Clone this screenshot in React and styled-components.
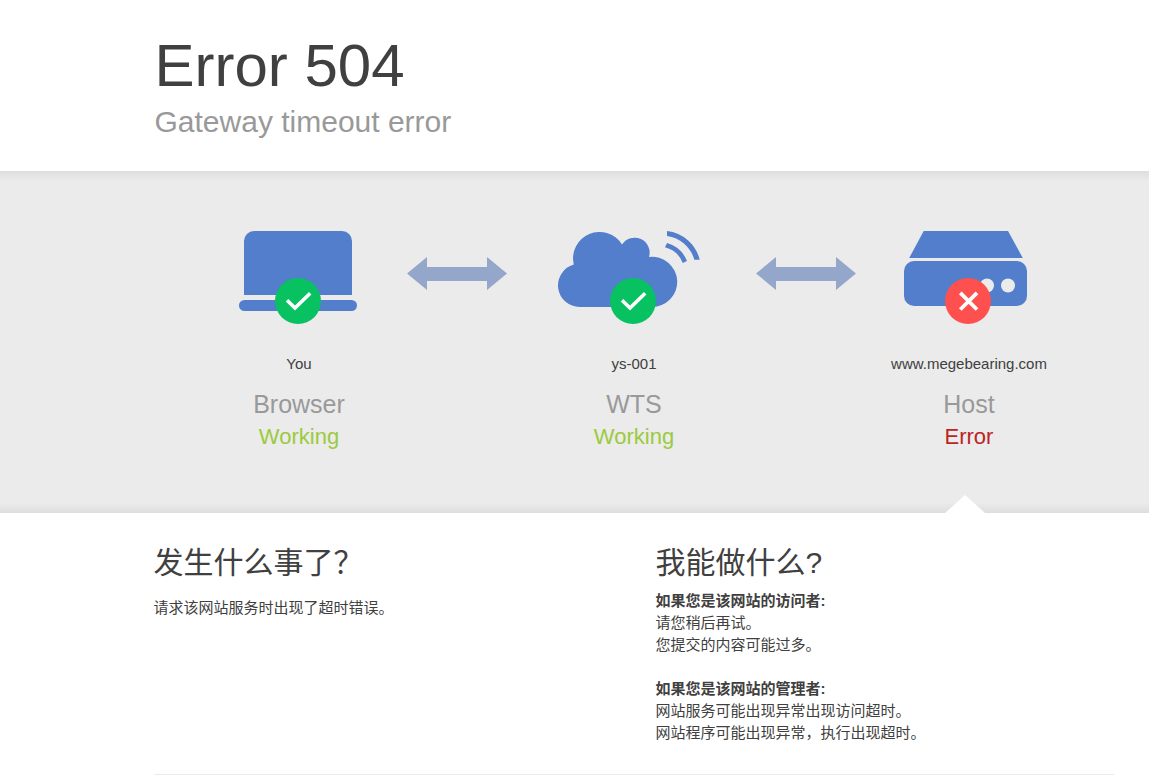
import React from 'react'
import styled, { createGlobalStyle } from 'styled-components'

const GlobalStyle = createGlobalStyle`
  body {
    margin: 0;
    background-color: #fff;
    color: #404040;
    font-family: "Liberation Sans", Arial, "Noto Sans CJK SC", sans-serif;
    font-size: 15px;
    line-height: 22px;
  }
`

const Wrapper = styled.div`
  max-width: 960px;
  margin-left: max(20px, calc(50% - 420px));
`

const Header = styled.header`
  padding: 33px 0 31px;
`

const Title = styled.h1`
  margin: 0 0 5px;
  font-size: 60px;
  font-weight: 400;
  line-height: 66px;
`

const Subtitle = styled.h2`
  margin: 0;
  font-size: 30px;
  font-weight: 400;
  line-height: 36px;
  color: #999;
`

const StatusBand = styled.section`
  background: linear-gradient(to bottom, #dedede, #ebebeb 3%, #ebebeb 97%, #dedede);
`

const StatusRow = styled.div`
  display: grid;
  grid-template-columns: 217fr 104px 245fr 100px 225fr;
  padding: 0 33px 0 36px;
`

const StatusItem = styled.div`
  position: relative;
  display: flex;
  flex-direction: column;
  align-items: center;
  padding: 54px 0 63px;
`

const StatusIcon = styled.svg`
  width: 160px;
  height: 100px;
  margin-bottom: 28px;
  fill: #527ecc;
`

const Arrow = styled.svg`
  width: 100px;
  height: 33px;
  margin-top: 86px;
  overflow: visible;
  fill: #94a7cb;
`

const NodeName = styled.span`
  margin-bottom: 14px;
`

const NodeType = styled.h3`
  margin: 0 0 5px;
  font-size: 25px;
  font-weight: 400;
  line-height: 30px;
  color: #999;
`

const NodeStatus = styled.span`
  font-size: 22px;
  line-height: 26px;
  color: ${(props) => (props.$error ? '#bd2426' : '#9bca3e')};
`

const Notch = styled.span`
  position: absolute;
  bottom: 0;
  left: calc(50% - 24px);
  border: solid transparent;
  border-width: 0 20px 18px;
  border-bottom-color: #fff;
`

const Details = styled(Wrapper)`
  margin-left: max(20px, calc(50% - 421px));
`

const Columns = styled.div`
  display: grid;
  grid-template-columns: 1fr 1fr;
  gap: 44px;
  padding: 32px 0 30px;
  border-bottom: 1px solid #ebebeb;
`

const Heading = styled.h2`
  margin: 0 0 ${(props) => (props.$spaced ? '16px' : '9px')};
  font-size: 30px;
  font-weight: 400;
  line-height: 36px;
`

const Text = styled.p`
  margin: 0 0 22px;

  &:last-child {
    margin-bottom: 0;
  }
`

const OkBadge = () => (
  <>
    <circle cx="80" cy="76" r="23" fill="#08c160" />
    <path d="M69 75.2 77 83 92.2 68.2" fill="none" stroke="#fff" strokeWidth="3.6" />
  </>
)

const ErrorBadge = () => (
  <>
    <circle cx="80" cy="76" r="23" fill="#ff5050" />
    <path d="M72.3 67.8 89 84.5M89 67.8 72.3 84.5" fill="none" stroke="#fff" strokeWidth="3.8" />
  </>
)

const LaptopIcon = () => (
  <StatusIcon viewBox="1 0 160 100" aria-hidden="true">
    <path d="M26 70V16A10 10 0 0 1 36 6H124A10 10 0 0 1 134 16V70Z" />
    <rect x="21" y="75" width="118" height="11" rx="5.5" />
    <OkBadge />
  </StatusIcon>
)

const CloudIcon = () => (
  <StatusIcon viewBox="1 0 160 100" aria-hidden="true">
    <path d="M27 82A21.6 21.6 0 0 1 20.8 39.6A26.4 26.4 0 0 1 69 19.6A15 15 0 0 1 96 32A25.1 25.1 0 1 1 98.6 82Z" />
    <path d="M114 6A38 38 0 0 1 146.7 34.7H141.3A33 33 0 0 0 114 11Z" />
    <path d="M114 18A30.5 30.5 0 0 1 134 36L129.8 38A26 26 0 0 0 112 22.3Z" />
    <OkBadge />
  </StatusIcon>
)

const ServerIcon = () => (
  <StatusIcon viewBox="1 0 160 100" aria-hidden="true">
    <path d="M35.7 6H120L134.8 33H21.2Z" />
    <rect x="16" y="36" width="123" height="45" rx="10" />
    <circle cx="99" cy="60.5" r="7" fill="#ebebeb" />
    <circle cx="120" cy="60.5" r="7" fill="#ebebeb" />
    <ErrorBadge />
  </StatusIcon>
)

const DoubleArrow = () => (
  <Arrow viewBox="1 0 100 33" aria-hidden="true">
    <path d="M0 16.5 20 0V10H80V0L100 16.5 80 33V24H20V33Z" />
  </Arrow>
)

const App = () => {
  return (
    <>
      <GlobalStyle />
      <Wrapper>
        <Header>
          <Title>Error 504</Title>
          <Subtitle>Gateway timeout error</Subtitle>
        </Header>
      </Wrapper>
      <StatusBand>
        <Wrapper>
          <StatusRow>
            <StatusItem>
              <LaptopIcon />
              <NodeName>You</NodeName>
              <NodeType>Browser</NodeType>
              <NodeStatus>Working</NodeStatus>
            </StatusItem>
            <DoubleArrow />
            <StatusItem>
              <CloudIcon />
              <NodeName>ys-001</NodeName>
              <NodeType>WTS</NodeType>
              <NodeStatus>Working</NodeStatus>
            </StatusItem>
            <DoubleArrow />
            <StatusItem>
              <ServerIcon />
              <NodeName>www.megebearing.com</NodeName>
              <NodeType>Host</NodeType>
              <NodeStatus $error>Error</NodeStatus>
              <Notch />
            </StatusItem>
          </StatusRow>
        </Wrapper>
      </StatusBand>
      <Details lang="zh-CN">
        <Columns>
          <div>
            <Heading $spaced>发生什么事了？</Heading>
            <Text>请求该网站服务时出现了超时错误。</Text>
          </div>
          <div>
            <Heading>我能做什么?</Heading>
            <Text>
              <strong>如果您是该网站的访问者:</strong>
              <br />
              请您稍后再试。
              <br />
              您提交的内容可能过多。
            </Text>
            <Text>
              <strong>如果您是该网站的管理者:</strong>
              <br />
              网站服务可能出现异常出现访问超时。
              <br />
              网站程序可能出现异常，执行出现超时。
            </Text>
          </div>
        </Columns>
      </Details>
    </>
  )
}

export default App
